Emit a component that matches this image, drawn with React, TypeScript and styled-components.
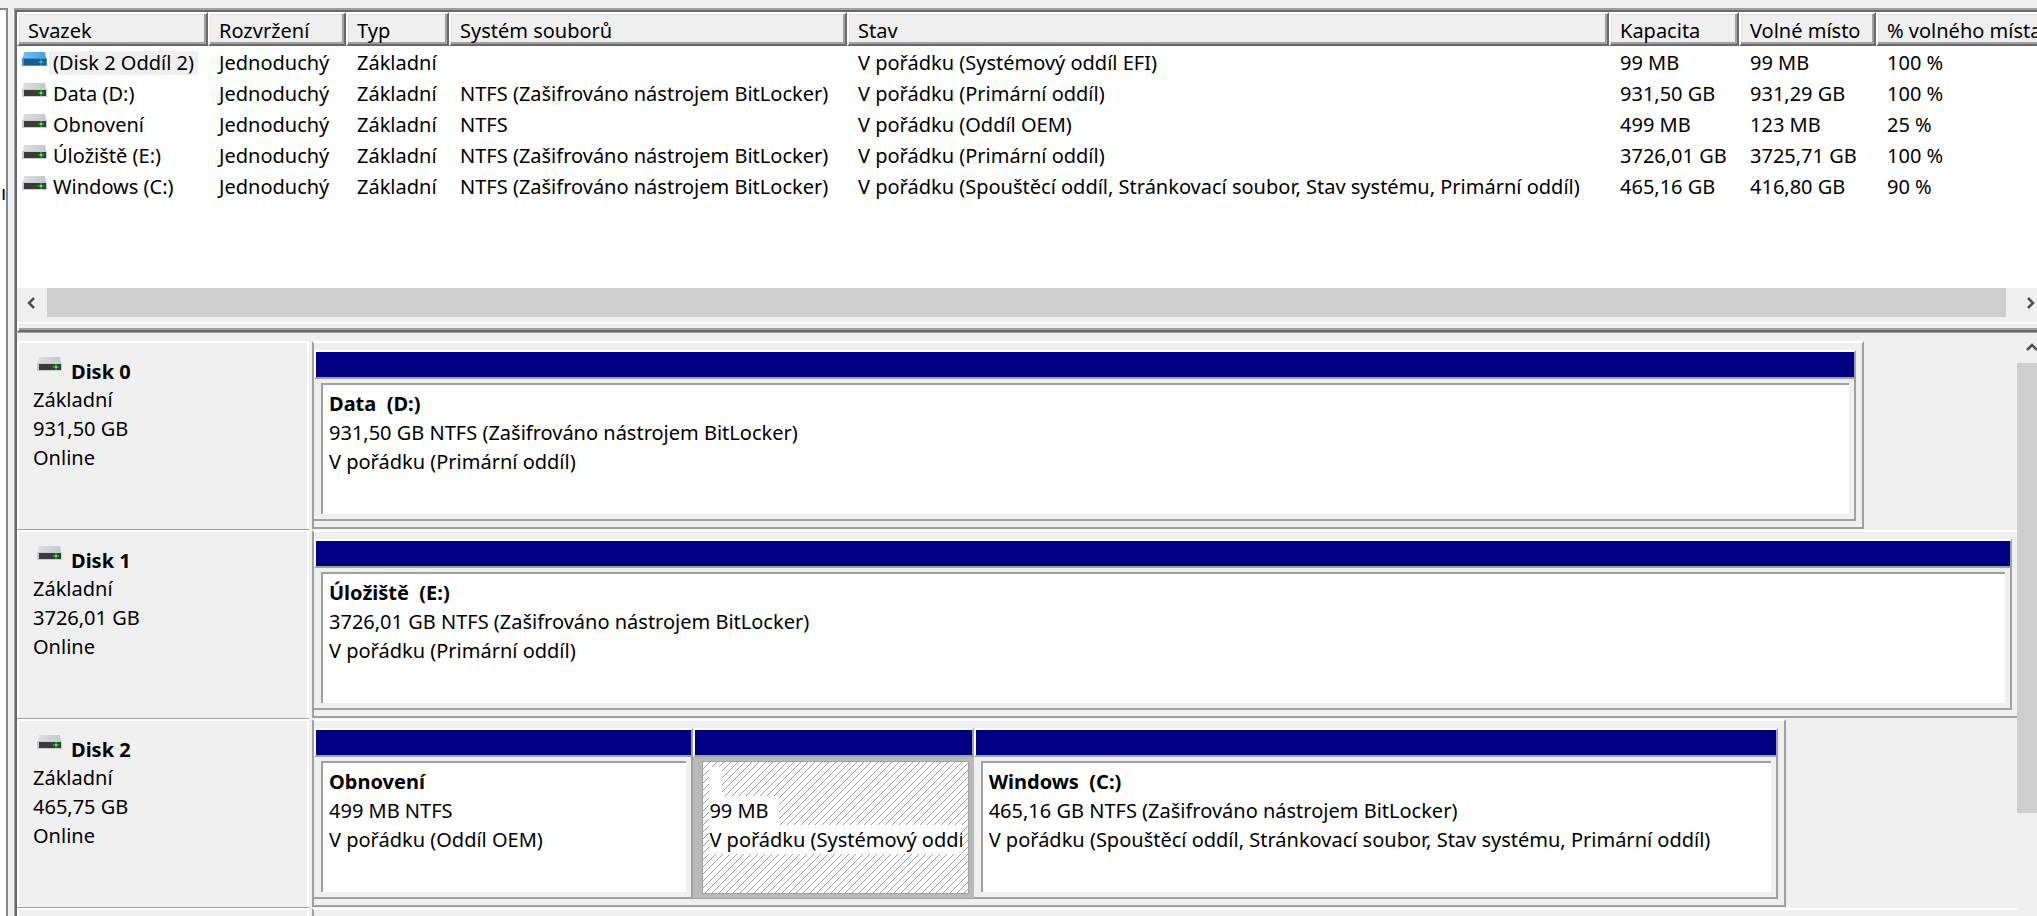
import React from "react";
import styled, { createGlobalStyle } from "styled-components";

const Global = createGlobalStyle`
  *, *::before, *::after { box-sizing: border-box; }
  body {
    margin: 0;
    overflow: hidden;
    background: #efefef;
    color: #000;
    font: 20px/29px "Noto Sans", "Open Sans", sans-serif;
  }
`;

const Window = styled.div`
  display: flex;
  height: 100vh;
  padding-top: 8px;
  overflow: hidden;
`;

const TreePane = styled.aside`
  flex: none;
  width: 8px;
  margin-right: 6px;
  padding: 168px 0 0 1px;
  overflow: hidden;
  background: #fff;
  border: solid #828790;
  border-width: 2px 2px 0 0;
`;

const Console = styled.main`
  flex: 1;
  min-width: 0;
  margin-right: -9px;
  display: flex;
  flex-direction: column;
  border: 2px solid #a0a0a0;
  border-width: 2px 0 0 1px;
`;

const ListPane = styled.section`
  flex: none;
  height: 278px;
  overflow: hidden;
  background: #fff;
  border: 2px solid #696969;
  border-width: 2px 0 0 2px;
`;

const VolumeTable = styled.table`
  width: calc(100% + 19px);
  table-layout: fixed;
  border-collapse: separate;
  border-spacing: 0;
`;

const Column = styled.col<{ $width?: number }>`
  width: ${(p) => (p.$width ? `${p.$width}px` : "auto")};
`;

const HeaderCell = styled.th`
  height: 34px;
  padding: 4px 0 0 9px;
  overflow: hidden;
  background: #efefef;
  border: 2px solid;
  border-color: #fff #696969 #696969 #fff;
  box-shadow: inset -2px -2px #a0a0a0, inset 1px 1px #e3e3e3;
  font-weight: 400;
  line-height: 26px;
  text-align: left;
  white-space: nowrap;
`;

const Cell = styled.td`
  height: 31px;
  padding: 3px 0 0 11px;
  overflow: hidden;
  line-height: 28px;
  white-space: nowrap;
`;

const NameCell = styled(Cell)`
  padding-left: 5px;
`;

const NameLine = styled.div`
  display: flex;
  align-items: flex-start;
  gap: 2px;
  height: 28px;
`;

const Name = styled.span<{ $selected?: boolean }>`
  height: 24px;
  margin-top: 2px;
  padding: 0 4px;
  line-height: 24px;
  background: ${(p) => (p.$selected ? "#efefef" : "transparent")};
`;

const DriveSvg = styled.svg`
  flex: none;
  width: 25px;
  height: 15px;
  margin-top: 3px;
`;

const HScroll = styled.div`
  flex: none;
  display: flex;
  align-items: center;
  height: 29px;
  background: #efefef;
  border-left: 2px solid #696969;
`;

const ScrollButton = styled.button`
  flex: none;
  display: flex;
  align-items: center;
  justify-content: center;
  width: 30px;
  height: 30px;
  padding: 0;
  border: 0;
  background: transparent;
`;

const HThumb = styled.div`
  flex: 1;
  height: 29px;
  margin-right: 10px;
  background: #cdcdcd;
`;

const Splitter = styled.div`
  flex: none;
  height: 16px;
  padding-top: 5px;
  background: #efefef;
  border-left: 2px solid #696969;
  border-bottom: 1px solid #a0a0a0;

  &::after {
    content: "";
    display: block;
    height: 10px;
    border: solid;
    border-width: 2px 0 2px 2px;
    border-color: #fff #fff #696969 #fff;
    box-shadow: inset 0 -2px #a0a0a0, inset 0 1px #e3e3e3;
  }
`;

const GraphPane = styled.section`
  flex: 1;
  min-height: 0;
  display: flex;
  border-left: 2px solid #696969;
`;

const DiskList = styled.div`
  flex: 1;
  min-width: 0;
  padding-top: 8px;
  overflow: hidden;
`;

const VScroll = styled.div`
  flex: none;
  width: 29px;
  display: flex;
  flex-direction: column;
`;

const VThumb = styled.div`
  height: 450px;
  background: #cdcdcd;
`;

const DiskRow = styled.div`
  display: flex;
  height: 189px;
`;

const DiskLabel = styled.div`
  flex: none;
  width: 292px;
  height: 188px;
  padding: 11px 0 0 14px;
  border: solid #fff;
  border-width: 2px 2px 0 2px;
  box-shadow: 0 1px #a0a0a0;
`;

const DiskTitle = styled.div`
  display: flex;
  gap: 9px;
  height: 31px;
  padding-left: 4px;
  font-weight: 700;
  line-height: 36px;
`;

const Track = styled.div`
  flex: 1;
  min-width: 0;
  display: flex;
  padding-left: 3px;
`;

const Panel = styled.div<{ $share: number; $open?: boolean }>`
  flex: ${(p) => p.$share} 1 0;
  min-width: 0;
  height: 188px;
  display: flex;
  padding: 7px ${(p) => (p.$open ? 5 : 6)}px 6px 0;
  border: 2px solid #a0a0a0;
  border-right-width: ${(p) => (p.$open ? 0 : 2)}px;
  border-top-color: #fff;
`;

const Rest = styled.div<{ $share: number }>`
  flex: ${(p) => p.$share} 1 0;
`;

const Volume = styled.div<{ $share: number }>`
  flex: ${(p) => p.$share} 1 0;
  min-width: 0;
  display: flex;
  flex-direction: column;
`;

const Stripe = styled.div`
  flex: none;
  height: 29px;
  background: #000080;
  border: 2px solid;
  border-color: #fff #a0a0a0 #a0a0a0 #fff;
`;

const Box = styled.div<{ $selected?: boolean }>`
  flex: 1;
  display: flex;
  padding: ${(p) => (p.$selected ? "4px 5px 4px 9px" : "4px 5px 5px 7px")};
  background: ${(p) => (p.$selected ? "#b9b9b9" : "#efefef")};
  border: solid #a0a0a0;
  border-width: ${(p) => (p.$selected ? "0 0 1px" : "0 2px 2px 0")};
`;

const Inner = styled.div<{ $selected?: boolean }>`
  flex: 1;
  min-width: 0;
  padding: ${(p) => (p.$selected ? "5px 6px 0" : "4px 6px 0")};
  overflow: hidden;
  border: solid #a0a0a0;
  border-width: ${(p) => (p.$selected ? "1px" : "2px 0 0 2px")};
  background: ${(p) =>
    p.$selected
      ? "linear-gradient(135deg, #fff 43%, #a0a0a0 50%, #fff 57%) 0 0 / 7px 7px"
      : "#fff"};
`;

const Line = styled.div<{ $bold?: boolean }>`
  height: 29px;
  overflow: hidden;
  font-weight: ${(p) => (p.$bold ? 700 : 400)};
  white-space: pre;
`;

const Patch = styled.span`
  display: block;
  width: fit-content;
  min-width: 13px;
  height: 29px;
  background: #fff;
`;

function Drive({ selected }: { selected?: boolean }) {
  const id = selected ? "lidSelected" : "lid";
  return (
    <DriveSvg viewBox="0 0 25 15" aria-hidden="true">
      <defs>
        <linearGradient id={id}>
          <stop offset="0" stopColor={selected ? "#78bdf0" : "#dcdee2"} />
          <stop offset="1" stopColor={selected ? "#4a9ddd" : "#c4c7cb"} />
        </linearGradient>
      </defs>
      <path d="M2 0H23L24 6H1Z" fill={`url(#${id})`} />
      <path d="M0 6H25V14H0Z" fill={selected ? "#4294d5" : "#c8cacf"} />
      <path d="M2 7H24V13H2Z" fill={selected ? "#1a5a94" : "#3a3a3a"} />
      <path d="M16 10H22M19 7V13" stroke={selected ? "#198d99" : "#1d9a25"} strokeWidth="2" />
      <path d="M18 9H20V11H18Z" fill={selected ? "#33c8b0" : "#52f05a"} />
    </DriveSvg>
  );
}

function Chevron({ d }: { d: string }) {
  return (
    <svg width="12" height="12" viewBox="0 0 12 12" fill="none" stroke="#505050" strokeWidth="2.500" aria-hidden="true">
      <path d={d} />
    </svg>
  );
}

const columns: { title: string; width?: number }[] = [
  { title: "Svazek", width: 191 },
  { title: "Rozvržení", width: 138 },
  { title: "Typ", width: 103 },
  { title: "Systém souborů", width: 398 },
  { title: "Stav" },
  { title: "Kapacita", width: 130 },
  { title: "Volné místo", width: 137 },
  { title: "% volného místa", width: 189 },
];

const bitLocker = "NTFS (Zašifrováno nástrojem BitLocker)";
const bootState =
  "V pořádku (Spouštěcí oddíl, Stránkovací soubor, Stav systému, Primární oddíl)";

const volumes = [
  ["(Disk 2 Oddíl 2)", "", "V pořádku (Systémový oddíl EFI)", "99 MB", "99 MB", "100 %"],
  ["Data (D:)", bitLocker, "V pořádku (Primární oddíl)", "931,50 GB", "931,29 GB", "100 %"],
  ["Obnovení", "NTFS", "V pořádku (Oddíl OEM)", "499 MB", "123 MB", "25 %"],
  ["Úložiště (E:)", bitLocker, "V pořádku (Primární oddíl)", "3726,01 GB", "3725,71 GB", "100 %"],
  ["Windows (C:)", bitLocker, bootState, "465,16 GB", "416,80 GB", "90 %"],
];

type Part = { share: number; title: string; size: string; state: string; selected?: boolean };
type Disk = { name: string; size: string; share: number; parts: Part[] };

const disks: Disk[] = [
  {
    name: "Disk 0",
    size: "931,50 GB",
    share: 910,
    parts: [{ share: 1, title: "Data  (D:)", size: `931,50 GB ${bitLocker}`, state: "V pořádku (Primární oddíl)" }],
  },
  {
    name: "Disk 1",
    size: "3726,01 GB",
    share: 1000,
    parts: [{ share: 1, title: "Úložiště  (E:)", size: `3726,01 GB ${bitLocker}`, state: "V pořádku (Primární oddíl)" }],
  },
  {
    name: "Disk 2",
    size: "465,75 GB",
    share: 864,
    parts: [
      { share: 379, title: "Obnovení", size: "499 MB NTFS", state: "V pořádku (Oddíl OEM)" },
      { share: 280, title: " ", size: "99 MB  ", state: "V pořádku (Systémový oddíl EFI)", selected: true },
      { share: 804, title: "Windows  (C:)", size: `465,16 GB ${bitLocker}`, state: bootState },
    ],
  },
];

function VolumeBox({ part }: { part: Part }) {
  const lines = [part.title, part.size, part.state];
  return (
    <Volume $share={part.share}>
      <Stripe />
      <Box $selected={part.selected}>
        <Inner $selected={part.selected}>
          {lines.map((text, i) => (
            <Line key={i} $bold={i === 0}>
              {part.selected ? <Patch>{text}</Patch> : text}
            </Line>
          ))}
        </Inner>
      </Box>
    </Volume>
  );
}

export default function App() {
  return (
    <>
      <Global />
      <Window>
        <TreePane>ı</TreePane>
        <Console>
          <ListPane>
            <VolumeTable>
              <colgroup>
                {columns.map((c) => (
                  <Column key={c.title} $width={c.width} />
                ))}
              </colgroup>
              <thead>
                <tr>
                  {columns.map((c) => (
                    <HeaderCell key={c.title} scope="col">{c.title}</HeaderCell>
                  ))}
                </tr>
              </thead>
              <tbody>
                {volumes.map(([name, fs, state, size, free, percent], i) => (
                  <tr key={name}>
                    <NameCell>
                      <NameLine>
                        <Drive selected={i === 0} />
                        <Name $selected={i === 0}>{name}</Name>
                      </NameLine>
                    </NameCell>
                    <Cell>Jednoduchý</Cell>
                    <Cell>Základní</Cell>
                    <Cell>{fs}</Cell>
                    <Cell>{state}</Cell>
                    <Cell>{size}</Cell>
                    <Cell>{free}</Cell>
                    <Cell>{percent}</Cell>
                  </tr>
                ))}
              </tbody>
            </VolumeTable>
          </ListPane>
          <HScroll>
            <ScrollButton aria-label="Posunout doleva"><Chevron d="M8 1 3 6l5 5" /></ScrollButton>
            <HThumb />
            <ScrollButton aria-label="Posunout doprava"><Chevron d="M3 1l5 5-5 5" /></ScrollButton>
          </HScroll>
          <Splitter />
          <GraphPane>
            <DiskList>
              {disks.map((disk) => (
                <DiskRow key={disk.name}>
                  <DiskLabel>
                    <DiskTitle>
                      <Drive />
                      {disk.name}
                    </DiskTitle>
                    <Line>Základní</Line>
                    <Line>{disk.size}</Line>
                    <Line>Online</Line>
                  </DiskLabel>
                  <Track>
                    <Panel $share={disk.share} $open={disk.share === 1000}>
                      {disk.parts.map((part) => (
                        <VolumeBox key={part.title} part={part} />
                      ))}
                    </Panel>
                    {disk.share < 1000 && <Rest $share={1000 - disk.share} />}
                  </Track>
                </DiskRow>
              ))}
              <DiskRow>
                <DiskLabel />
                <Track>
                  <Panel $share={1000} $open />
                </Track>
              </DiskRow>
            </DiskList>
            <VScroll>
              <ScrollButton aria-label="Posunout nahoru"><Chevron d="M1 8l5-5 5 5" /></ScrollButton>
              <VThumb />
            </VScroll>
          </GraphPane>
        </Console>
      </Window>
    </>
  );
}
